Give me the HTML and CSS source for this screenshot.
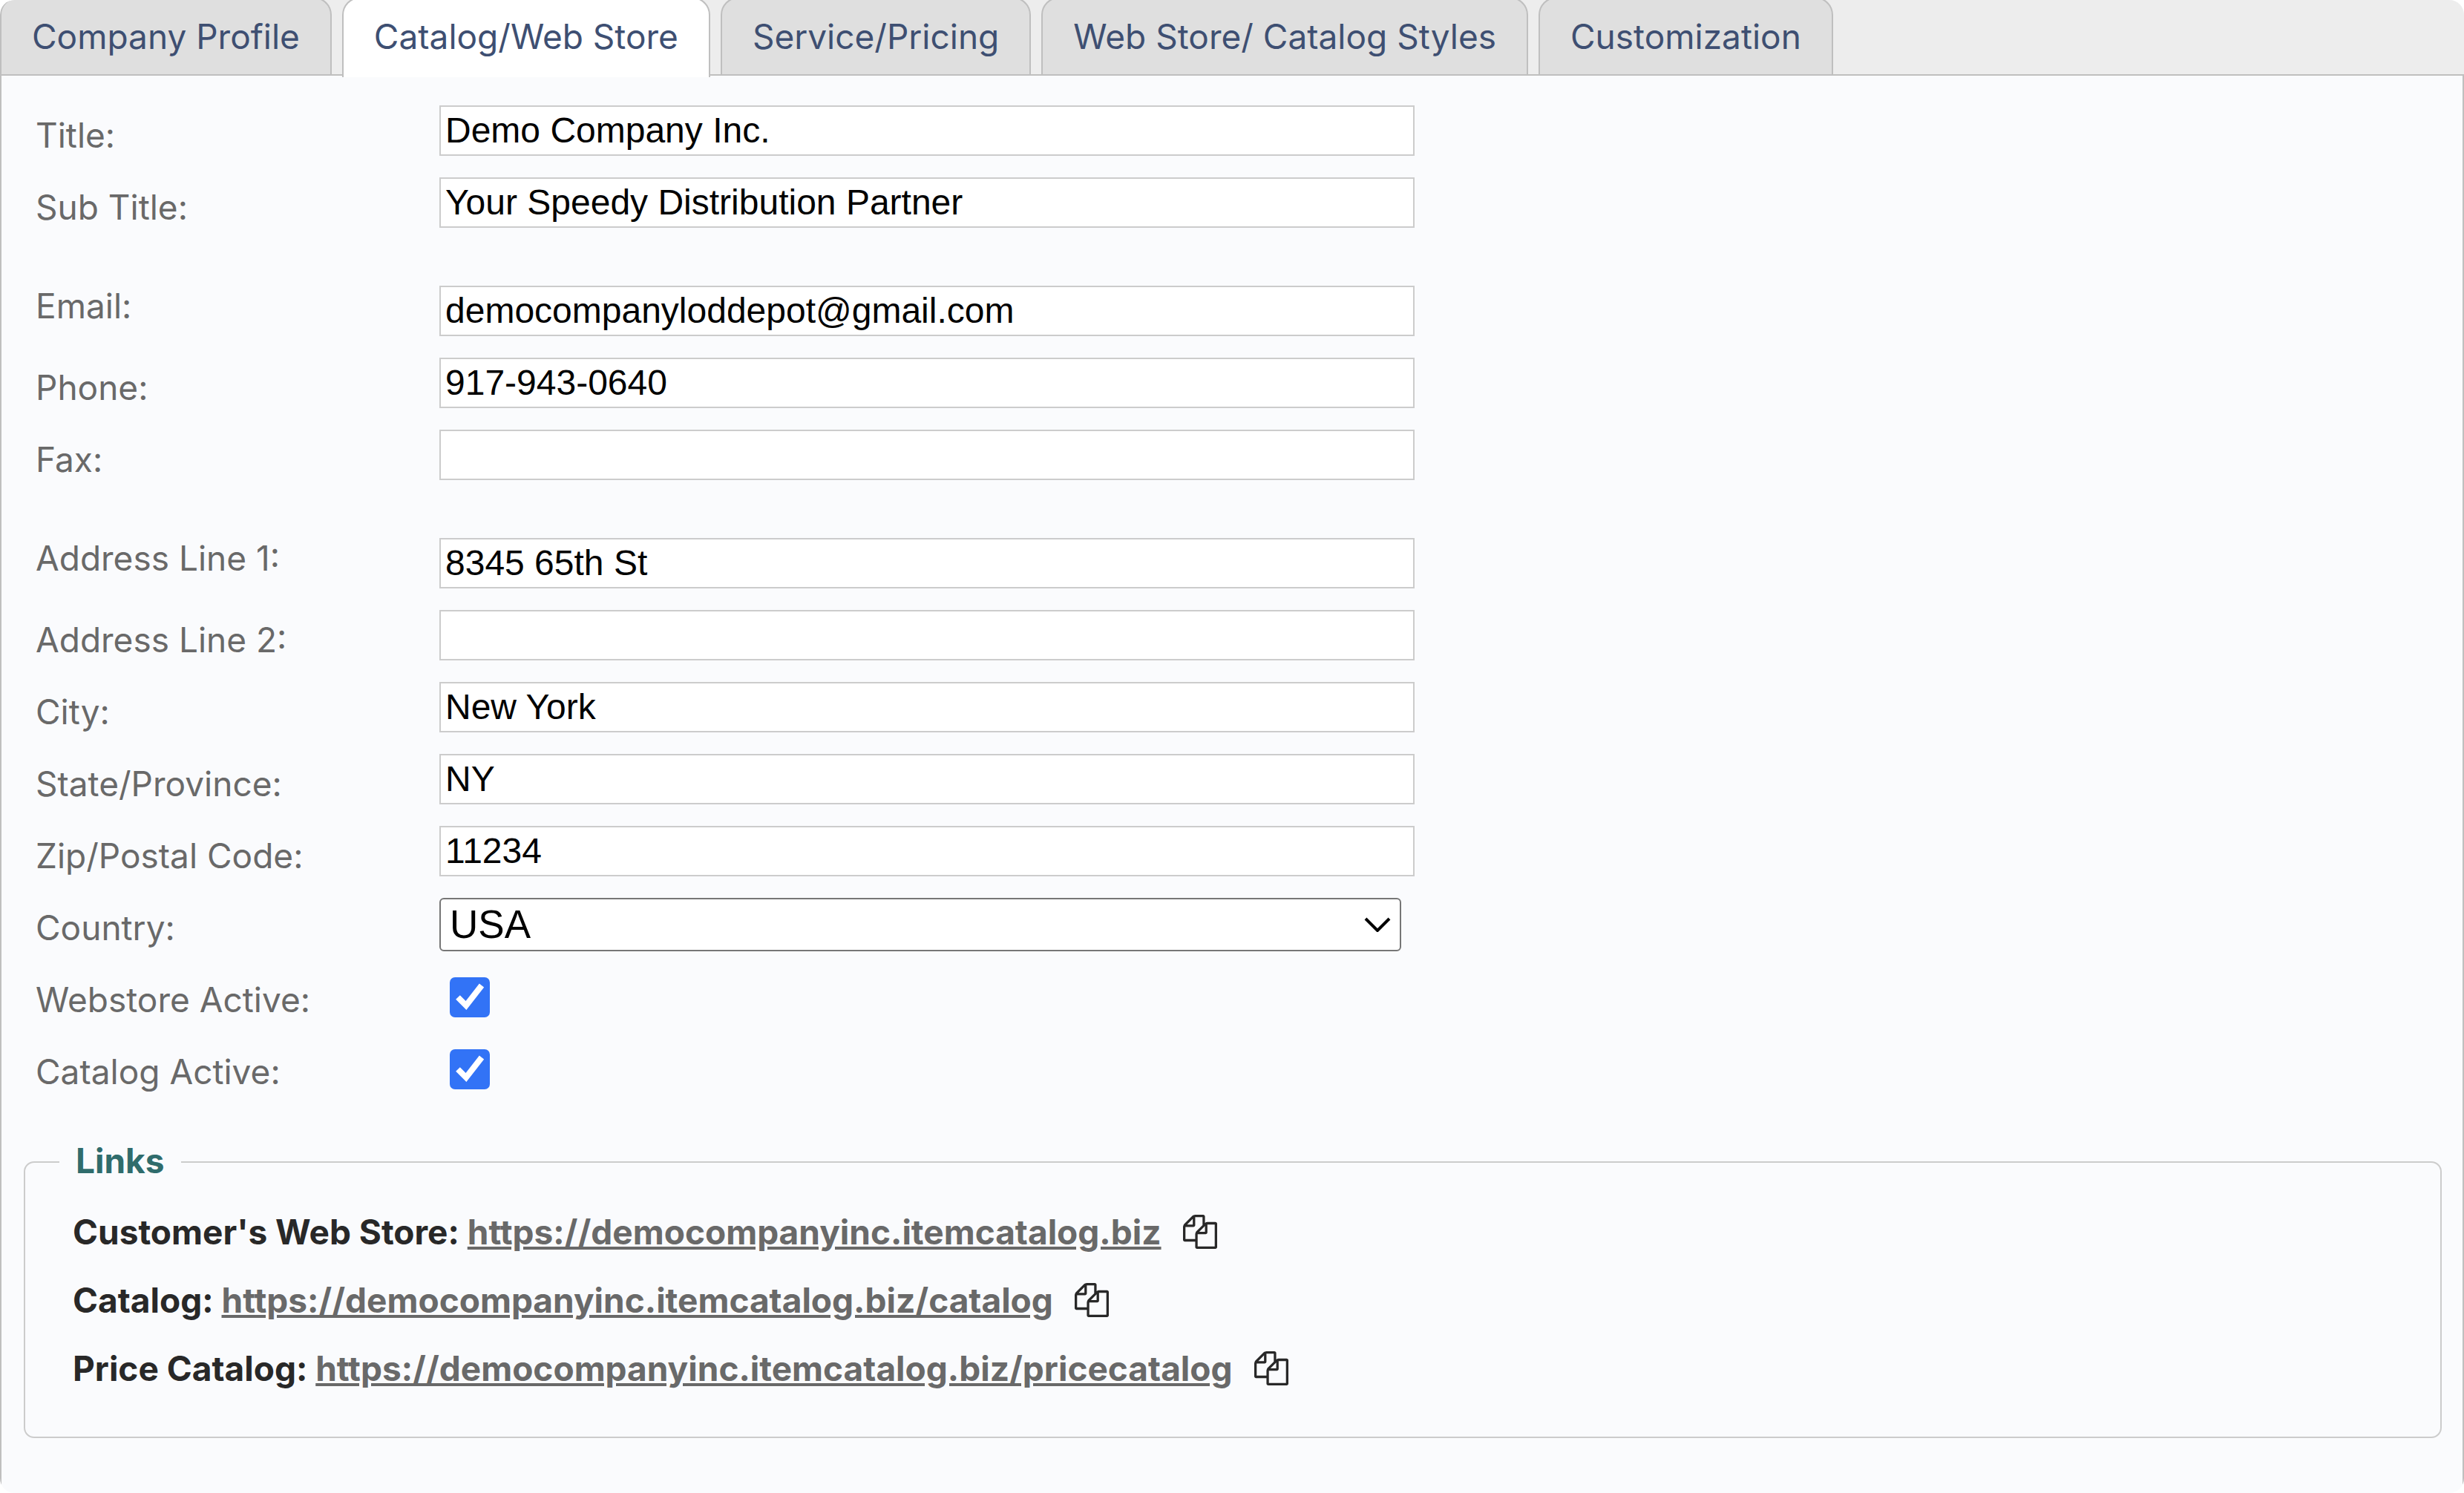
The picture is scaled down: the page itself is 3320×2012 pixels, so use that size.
FILE: index.html
```html
<!DOCTYPE html>
<html lang="en">
<head>
<meta charset="utf-8">
<title>Catalog/Web Store</title>
<link rel="stylesheet" href="styles.css">
</head>
<body>
<svg class="defs" aria-hidden="true">
  <symbol id="icon-copy" viewBox="0 0 1792 1792"><path d="M1696 384q40 0 68 28t28 68v1216q0 40-28 68t-68 28h-960q-40 0-68-28t-28-68v-288h-544q-40 0-68-28t-28-68v-672q0-40 20-88t48-76l408-408q28-28 76-48t88-20h416q40 0 68 28t28 68v328q68-40 128-40h416zm-544 213l-299 299h299v-299zm-640-384l-299 299h299v-299zm196 647l316-316v-416h-384v416q0 40-28 68t-68 28h-416v640h512v-256q0-40 20-88t48-76zm956 804v-1152h-384v416q0 40-28 68t-68 28h-416v640h896z"/></symbol>
  <symbol id="icon-check" viewBox="0 0 54 54"><path d="M11 27L22 38L43 11" fill="none" stroke="#fff" stroke-width="8"/></symbol>
</svg>
<main class="app">
  <nav class="tabs">
    <button class="tab" type="button">Company Profile</button>
    <button class="tab tab--active" type="button">Catalog/Web Store</button>
    <button class="tab" type="button">Service/Pricing</button>
    <button class="tab" type="button">Web Store/ Catalog Styles</button>
    <button class="tab" type="button">Customization</button>
  </nav>
  <form class="panel">
    <div class="row"><label class="label" for="title">Title:</label><input class="field" id="title" type="text" value="Demo Company Inc."></div>
    <div class="row"><label class="label" for="subtitle">Sub Title:</label><input class="field" id="subtitle" type="text" value="Your Speedy Distribution Partner"></div>
    <div class="row row--group"><label class="label" for="email">Email:</label><input class="field" id="email" type="text" value="democompanyloddepot@gmail.com"></div>
    <div class="row"><label class="label" for="phone">Phone:</label><input class="field" id="phone" type="text" value="917-943-0640"></div>
    <div class="row"><label class="label" for="fax">Fax:</label><input class="field" id="fax" type="text"></div>
    <div class="row row--group"><label class="label" for="addr1">Address Line 1:</label><input class="field" id="addr1" type="text" value="8345 65th St"></div>
    <div class="row"><label class="label" for="addr2">Address Line 2:</label><input class="field" id="addr2" type="text"></div>
    <div class="row"><label class="label" for="city">City:</label><input class="field" id="city" type="text" value="New York"></div>
    <div class="row"><label class="label" for="state">State/Province:</label><input class="field" id="state" type="text" value="NY"></div>
    <div class="row"><label class="label" for="zip">Zip/Postal Code:</label><input class="field" id="zip" type="text" value="11234"></div>
    <div class="row"><label class="label" for="country">Country:</label>
      <div class="select">
        <select class="select__control" id="country"><option>USA</option></select>
        <svg class="select__arrow" viewBox="0 0 36 20"><path d="M2 2L18 18L34 2" fill="none" stroke="#000" stroke-width="4"/></svg>
      </div>
    </div>
    <div class="row"><label class="label" for="webstore">Webstore Active:</label>
      <div class="check"><input class="check__box" id="webstore" type="checkbox" checked><svg class="check__mark"><use href="#icon-check"/></svg></div>
    </div>
    <div class="row"><label class="label" for="catalog">Catalog Active:</label>
      <div class="check"><input class="check__box" id="catalog" type="checkbox" checked><svg class="check__mark"><use href="#icon-check"/></svg></div>
    </div>
    <fieldset class="links">
      <legend class="links__title">Links</legend>
      <p class="links__row"><span>Customer's Web Store: <a class="links__url" href="https://democompanyinc.itemcatalog.biz">https://democompanyinc.itemcatalog.biz</a></span><button class="copy" type="button" aria-label="Copy"><svg class="copy__icon"><use href="#icon-copy"/></svg></button></p>
      <p class="links__row"><span>Catalog: <a class="links__url" href="https://democompanyinc.itemcatalog.biz/catalog">https://democompanyinc.itemcatalog.biz/catalog</a></span><button class="copy" type="button" aria-label="Copy"><svg class="copy__icon"><use href="#icon-copy"/></svg></button></p>
      <p class="links__row"><span>Price Catalog: <a class="links__url" href="https://democompanyinc.itemcatalog.biz/pricecatalog">https://democompanyinc.itemcatalog.biz/pricecatalog</a></span><button class="copy" type="button" aria-label="Copy"><svg class="copy__icon"><use href="#icon-copy"/></svg></button></p>
    </fieldset>
  </form>
</main>
</body>
</html>
```
FILE: styles.css
```css
* { box-sizing: border-box; }

body {
  margin: 0;
  background: #fff;
  font-family: Inter, sans-serif;
  font-size: 46px;
  line-height: 60px;
}

.defs { display: none; }

.app {
  display: flex;
  flex-direction: column;
  min-height: 100vh;
  overflow: hidden;
  border-radius: 20px;
  background: #fafbfd;
}

.tabs {
  display: flex;
  gap: 14px;
  height: 106px;
  margin-top: -4px;
  border-bottom: 2px solid #bfbfbf;
  background: #ededed;
}

.tab {
  height: 104px;
  padding: 0 41px;
  border: 2px solid #bfbfbf;
  border-bottom: 0;
  border-radius: 24px 24px 0 0;
  background: #dfdfdf;
  color: #3e4f72;
  font: inherit;
  white-space: nowrap;
}

.tab--active {
  height: 108px;
  padding-bottom: 4px;
  background: #fff;
}

.panel {
  flex: 1;
  padding: 40px 28px 60px 30px;
  border: solid #bfbfbf;
  border-width: 0 2px;
}

.row {
  display: grid;
  grid-template-columns: 544px 1fr;
  align-items: start;
  min-height: 97px;
  padding-left: 16px;
}

.label {
  margin-top: 10px;
  color: #696969;
}

.row--group { padding-top: 36px; min-height: 146px; }
.row--group .field { margin-top: 13px; }

.field {
  width: 1314px;
  height: 68px;
  padding: 0 6px 2px;
  border: 2px solid #ccc;
  border-radius: 0;
  background: #fff;
  color: #000;
  font: 48px/60px "Liberation Sans", Arial, sans-serif;
}

.select {
  display: grid;
  align-items: center;
  width: 1296px;
}

.select__control {
  grid-area: 1 / 1;
  height: 72px;
  padding: 0 12px;
  appearance: none;
  border: 2px solid #767676;
  border-radius: 6px;
  background: #fff;
  color: #000;
  font: 53px/64px "Liberation Sans", Arial, sans-serif;
}

.select__arrow {
  grid-area: 1 / 1;
  justify-self: end;
  width: 36px;
  height: 20px;
  margin-right: 14px;
  pointer-events: none;
}

.check {
  display: grid;
  width: 54px;
  margin: 10px 0 0 14px;
}

.check__box {
  grid-area: 1 / 1;
  width: 54px;
  height: 54px;
  margin: 0;
  appearance: none;
  border-radius: 7px;
  background: #3273f6;
}

.check__mark {
  grid-area: 1 / 1;
  width: 54px;
  height: 54px;
  pointer-events: none;
}

.links {
  margin: 33px 0 0;
  padding: 16px 64px 46px;
  border: 2px solid #ccc;
  border-radius: 14px;
  font-weight: 700;
}

.links__title {
  margin-left: -18px;
  padding: 0 22px 4px;
  color: #2f6c6c;
}

.links__row {
  display: flex;
  align-items: center;
  gap: 29px;
  height: 92px;
  margin: 0;
  color: #282828;
}

.links__url { color: #696969; }

.copy {
  display: flex;
  padding: 0;
  border: 0;
  background: none;
}

.copy__icon {
  width: 46px;
  height: 46px;
  fill: #282828;
}
```
